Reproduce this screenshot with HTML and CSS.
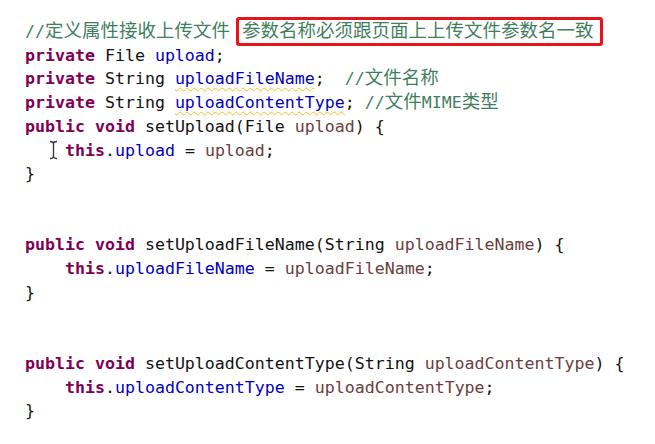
FILE: index.html
```html
<!DOCTYPE html>
<html lang="zh-CN">

<head>
    <meta charset="UTF-8">
    <meta name="viewport" content="width=device-width, initial-scale=1.0">
    <title>文件上传 Action</title>
    <link rel="stylesheet" href="styles.css">
</head>

<body>
<pre class="code"><span class="cm">//<span class="zh">定义属性接收上传文件</span> <span class="mark"><span class="zh">参数名称必须跟页面上上传文件参数名一致</span></span></span>
<span class="kw">private</span> File <span class="fd">upload</span>;
<span class="kw">private</span> String <span class="fd warn">uploadFileName</span>;  <span class="cm">//<span class="zh">文件名称</span></span>
<span class="kw">private</span> String <span class="fd warn">uploadContentType</span>; <span class="cm">//<span class="zh">文件</span>MIME<span class="zh">类型</span></span>
<span class="kw">public</span> <span class="kw">void</span> setUpload(File <span class="pm">upload</span>) {
  <span class="caret"><svg width="20" height="20" viewBox="0 0 20 20"><path d="M5 1.5 Q8.5 1.5 8.5 4 V16 Q8.5 18.5 5 18.5 M12 1.5 Q8.5 1.5 8.5 4 M8.5 16 Q8.5 18.5 12 18.5" fill="none" stroke="#333" stroke-width="1.3"/></svg></span><span class="kw">this</span>.<span class="fd">upload</span> = <span class="pm">upload</span>;
}


<span class="kw">public</span> <span class="kw">void</span> setUploadFileName(String <span class="pm">uploadFileName</span>) {
    <span class="kw">this</span>.<span class="fd">uploadFileName</span> = <span class="pm">uploadFileName</span>;
}


<span class="kw">public</span> <span class="kw">void</span> setUploadContentType(String <span class="pm">uploadContentType</span>) {
    <span class="kw">this</span>.<span class="fd">uploadContentType</span> = <span class="pm">uploadContentType</span>;
}</pre>
</body>

</html>
```

FILE: styles.css
```css
* {
    margin: 0;
    padding: 0;
    box-sizing: border-box;
}

body {
    background: #ffffff;
    color: #111111;
}

.code {
    font-family: 'DejaVu Sans Mono', 'Liberation Mono', monospace;
    font-size: 16.6px;
    line-height: 23.7px;
    padding: 20px 0 0 25px;
    white-space: pre;
}

.zh {
    font-family: 'Noto Sans CJK SC', 'Noto Sans', sans-serif;
    font-size: 18.5px;
    line-height: 1;
}

.kw {
    color: #7f0055;
    font-weight: bold;
}

.fd {
    color: #0000c0;
}

.pm {
    color: #6a3e3e;
}

.cm {
    color: #3f7f5f;
}

.warn {
    text-decoration: underline wavy #e6c21f;
    text-decoration-thickness: 1px;
    text-underline-offset: 3px;
}

.mark {
    display: inline-block;
    border: 3px solid #e8141b;
    border-radius: 3px;
    line-height: 23px;
    padding: 0 6px 0 3px;
    margin: -3px 0 -3px -4px;
}

.caret {
    display: inline-block;
    width: 20px;
    height: 20px;
    vertical-align: -4px;
}

.caret svg {
    display: block;
}
```
